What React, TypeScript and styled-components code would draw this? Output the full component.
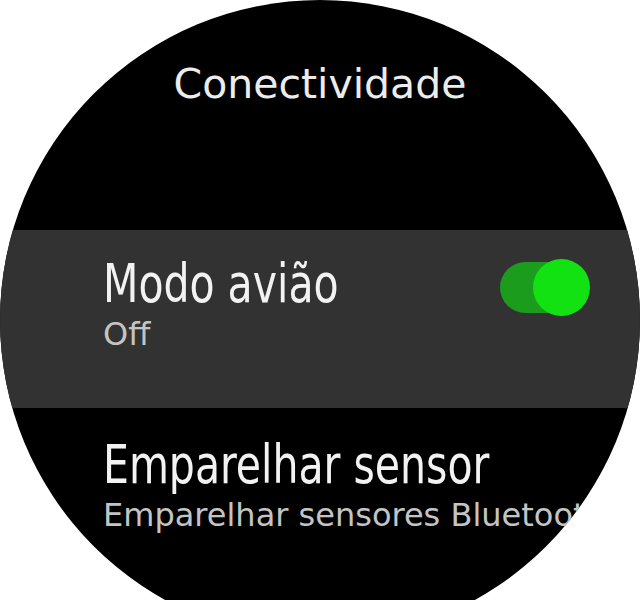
import React from "react";
import styled, { createGlobalStyle } from "styled-components";

const Global = createGlobalStyle`
  html, body {
    margin: 0;
    padding: 0;
    background: #ffffff;
    overflow: hidden;
  }
  #root {
    width: 640px;
    height: 600px;
    overflow: hidden;
  }
`;

const Screen = styled.div`
  width: 640px;
  height: 640px;
  border-radius: 50%;
  background: #000000;
  overflow: hidden;
  display: flex;
  flex-direction: column;
`;

const Header = styled.div`
  height: 230px;
  box-sizing: border-box;
  padding-top: 64px;
  display: flex;
  justify-content: center;
`;

const Title = styled.div`
  font-family: "DejaVu Sans", Verdana, sans-serif;
  font-size: 41px;
  line-height: 40px;
  color: #ececec;
  white-space: nowrap;
`;

const Row = styled.div<{ $selected?: boolean }>`
  box-sizing: border-box;
  height: ${(p) => (p.$selected ? "178px" : "auto")};
  background: ${(p) => (p.$selected ? "#323232" : "transparent")};
  padding: ${(p) => (p.$selected ? "27px 50px 0 103px" : "30px 0 0 103px")};
  display: flex;
  flex-direction: column;
  gap: 8px;
`;

const LabelLine = styled.div`
  height: 53px;
  display: flex;
  align-items: flex-start;
  justify-content: space-between;
`;

const Label = styled.div`
  font-family: "DejaVu Sans Condensed", "DejaVu Sans", sans-serif;
  font-size: 53px;
  line-height: 53px;
  color: #f2f2f2;
  white-space: nowrap;
  transform: scaleX(0.86);
  transform-origin: left center;
`;

const Sub = styled.div`
  font-family: "DejaVu Sans", Verdana, sans-serif;
  font-size: 32px;
  line-height: 33px;
  color: #c4c4c4;
  white-space: nowrap;
`;

const Toggle = styled.div`
  position: relative;
  width: 90px;
  height: 57px;
  margin-top: 2px;
  flex: none;
`;

const Track = styled.div`
  position: absolute;
  left: 0;
  top: 3px;
  width: 84px;
  height: 51px;
  border-radius: 26px;
  background: #1c9c1c;
`;

const Knob = styled.div`
  position: absolute;
  right: 0;
  top: 0;
  width: 57px;
  height: 57px;
  border-radius: 50%;
  background: #12e112;
`;

export default function App() {
  return (
    <>
      <Global />
      <Screen>
        <Header>
          <Title>Conectividade</Title>
        </Header>
        <Row $selected>
          <LabelLine>
            <Label>Modo avião</Label>
            <Toggle>
              <Track />
              <Knob />
            </Toggle>
          </LabelLine>
          <Sub>Off</Sub>
        </Row>
        <Row>
          <Label>Emparelhar sensor</Label>
          <Sub>Emparelhar sensores Bluetooth</Sub>
        </Row>
      </Screen>
    </>
  );
}
